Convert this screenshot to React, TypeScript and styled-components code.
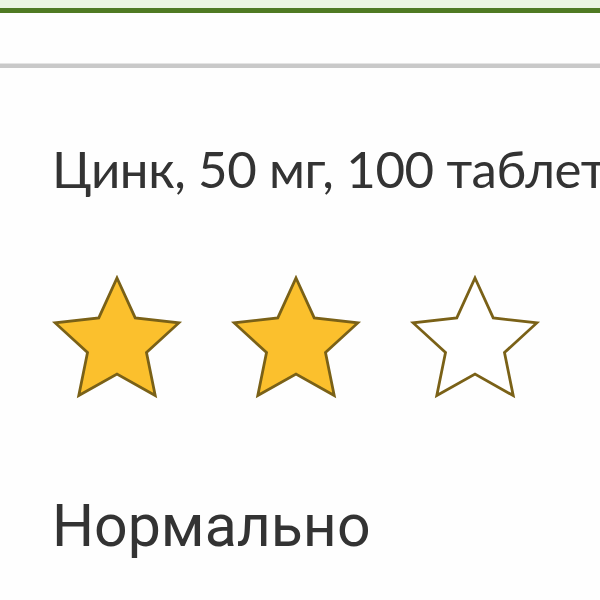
import React from 'react';
import styled, { createGlobalStyle } from 'styled-components';

const GlobalStyle = createGlobalStyle`
  html, body {
    margin: 0;
    padding: 0;
    background: #fefefe;
    overflow: hidden;
  }
`;

const Page = styled.div`
  width: 600px;
  height: 600px;
  overflow: hidden;
  background: #fefefe;
`;

const TopBar = styled.div`
  height: 8px;
  background: #ebf5e1;
  border-bottom: 5px solid #4f7a23;
`;

const Header = styled.div`
  height: 50px;
  background: #fefefe;
  border-bottom: 1px solid #e4e4e4;
`;

const HeaderRule = styled.div`
  height: 4px;
  background: #c9c9c9;
`;

const Content = styled.div`
  padding: 0 0 0 52px;
`;

const Title = styled.h1`
  margin: 71px 0 0;
  font-family: Lato, 'Open Sans', sans-serif;
  font-weight: 400;
  font-size: 51px;
  letter-spacing: -0.4px;
  line-height: 60px;
  color: #333;
  white-space: nowrap;
`;

const Stars = styled.div`
  display: flex;
  gap: 45px;
  margin: 76px 0 0 -2px;
  height: 128px;
`;

const StarBox = styled.svg`
  width: 134px;
  height: 128px;
  display: block;
  flex: none;
`;

const Verdict = styled.div`
  margin: 88px 0 0;
  font-family: Roboto, 'Noto Sans', sans-serif;
  font-size: 59px;
  line-height: 70px;
  color: #333;
`;

// five-point star, outer radius 65, inner 31
const starPoints = (() => {
  const pts: string[] = [];
  for (let i = 0; i < 10; i++) {
    const r = i % 2 === 0 ? 65 : 31;
    const a = -Math.PI / 2 + (i * Math.PI) / 5;
    pts.push(`${(67 + r * Math.cos(a)).toFixed(2)},${(68 + r * Math.sin(a)).toFixed(2)}`);
  }
  return pts.join(' ');
})();

const Star: React.FC<{ filled: boolean }> = ({ filled }) => (
  <StarBox viewBox="0 0 134 128">
    <polygon
      points={starPoints}
      fill={filled ? '#fbc02d' : '#ffffff'}
      stroke="#7a6117"
      strokeWidth={2.8}
      strokeLinejoin="miter"
    />
  </StarBox>
);

const App: React.FC = () => (
  <Page>
    <GlobalStyle />
    <TopBar />
    <Header />
    <HeaderRule />
    <Content>
      <Title>Цинк, 50 мг, 100 таблеток</Title>
      <Stars>
        <Star filled />
        <Star filled />
        <Star filled={false} />
      </Stars>
      <Verdict>Нормально</Verdict>
    </Content>
  </Page>
);

export default App;
